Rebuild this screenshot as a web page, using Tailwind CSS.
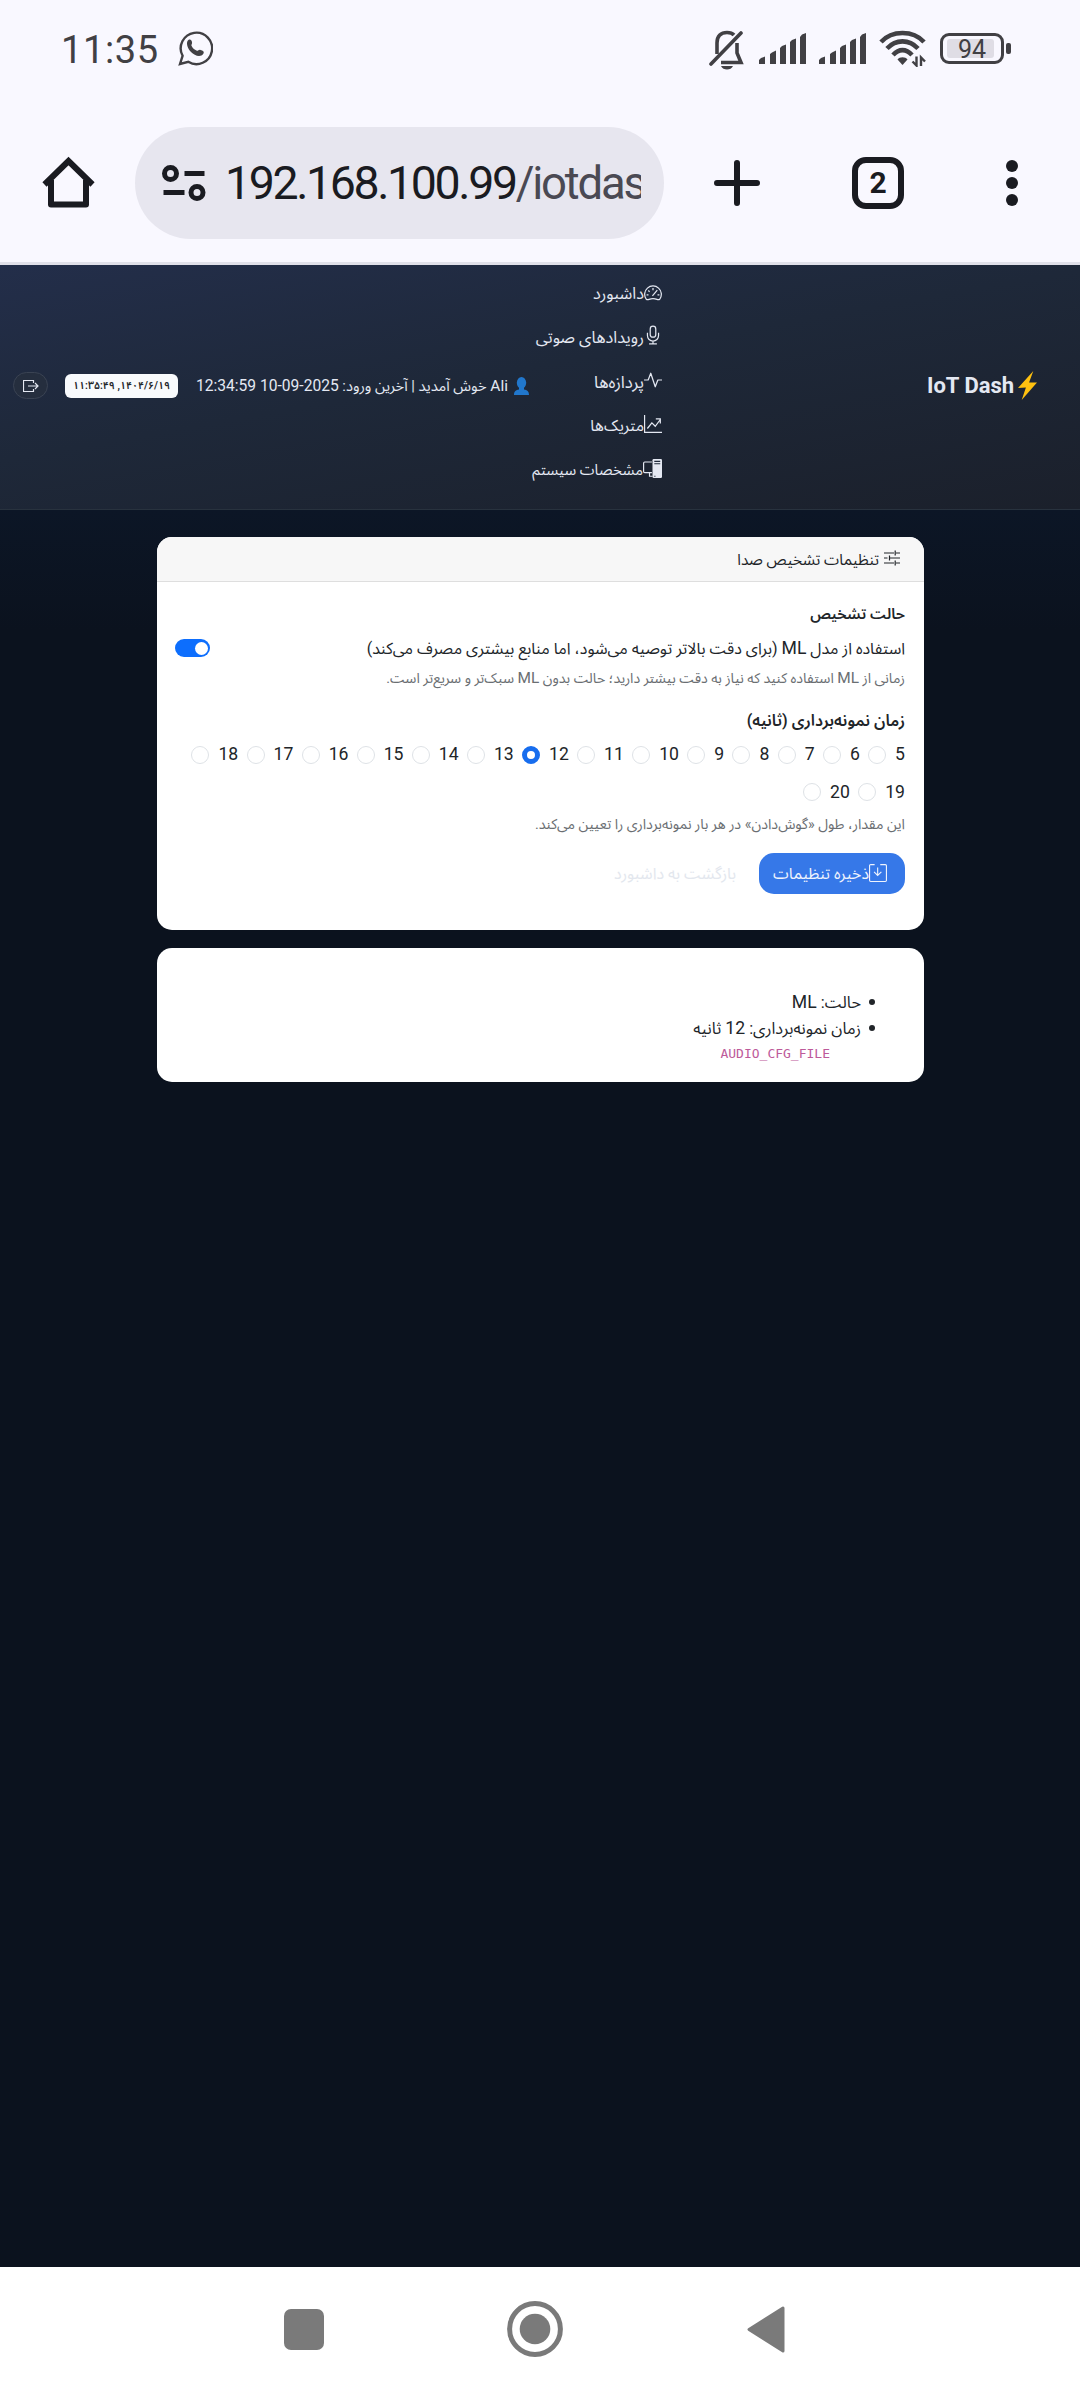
<!DOCTYPE html>
<html lang="fa">
<head>
<meta charset="utf-8">
<title>IoT Dash</title>
<script src="https://cdn.jsdelivr.net/npm/@tailwindcss/browser@4"></script>
</head>
<body class="w-[1080px] h-[2400px] overflow-hidden flex flex-col bg-[#0b121e] font-[Roboto,'Noto_Sans_Arabic','DejaVu_Sans',sans-serif]">

<!-- Status bar -->
<div class="h-[98px] shrink-0 bg-[#f9f8ff] flex items-center pl-[61px] pr-[69px] text-[#414044]">
  <span class="text-[38px] leading-[44px] tracking-[0.6px] font-[450] mt-[1px] w-[117px]">11:35</span>
  <svg class="w-[35px] h-[36px] -mt-[2px]" viewBox="0 0 35 36" fill="none"><path d="M2 34l2.600-8.200A15.700 15.700 0 1 1 10.300 31.800Z" stroke="currentColor" stroke-width="2.400"/><path d="M9.500 11c2-2.500 4-1.500 4.500 1 .4 2-.8 2.500-.6 3.600 1 2.600 3 4.300 5.500 5.200 1.200.3 1.800-1.500 3.600-.9 2.500.7 4 1.700 3 3.600-3 4.600-9 2-12.500-1.500C10 19 8 14 9.500 11Z" fill="currentColor"/></svg>
  <div class="ml-auto flex items-center">
    <svg class="w-[36px] h-[42px] -mt-[1px]" viewBox="0 0 36 42" fill="none" stroke="currentColor" stroke-width="3.600"><path d="M2 36 32 5" stroke-linecap="round"/><path d="M8 26V15C8 8 12 4.500 18 4.500c3 0 5.500.8 7 2.500"/><path d="M28 15v10l4 9.500H12"/><path d="M12 38h12c-1 2.500-3.500 3.400-6 3.400S13 40.500 12 38Z" fill="currentColor" stroke="none"/></svg>
    <svg class="w-[48px] h-[32px] ml-[14px]" viewBox="0 0 48 32" fill="currentColor"><path d="M0 31v-4l2-2 4-1.500V31ZM11 31V21l2-1.500 4-2V31ZM21 31V15l2-2 4-1.500V31ZM31 31V9l2-2 4-1.500V31ZM41 31V4l2-2.500L47 0V31Z"/></svg>
    <svg class="w-[48px] h-[32px] ml-[12px]" viewBox="0 0 48 32" fill="currentColor"><path d="M0 31v-4l2-2 4-1.500V31ZM11 31V21l2-1.500 4-2V31ZM21 31V15l2-2 4-1.500V31ZM31 31V9l2-2 4-1.500V31ZM41 31V4l2-2.500L47 0V31Z"/></svg>
    <svg class="w-[47px] h-[38px] ml-[12px] -mt-[2px]" viewBox="0 0 47 38" fill="none" stroke="currentColor" stroke-width="4.600"><path d="M2 13C13 1 34 1 45 13M8 19.500C17 10 30 10 39 19.500M14 26C20 19.500 27 19.500 33 26"/><path d="M18.500 30.500c2-3 8-3 10 0L23.500 36Z" fill="currentColor" stroke="none"/><path d="M37.500 27.500v9l-4-4M42 37V28.500l4 4" stroke-width="2.400"/></svg>
    <div class="ml-[14px] w-[64px] h-[31px] rounded-[9px] border-[3px] border-[#414044] p-[3px] -mt-[2px]"><div class="w-[47px] h-[19px] ml-[1px] bg-[#dfdde5] rounded-[3px]"><div class="w-[50px] text-center text-[25px] leading-[21px] font-[450]">94</div></div></div>
    <div class="w-[5px] h-[11px] ml-[2px] bg-[#414044] rounded-[2px] -mt-[2px]"></div>
  </div>
</div>

<!-- Browser toolbar -->
<div class="h-[167px] shrink-0 bg-[#f9f8ff] border-b-[3px] border-[#e0e0e9] flex text-[#1a1b21] pl-[42px]">
  <svg class="w-[53px] h-[54px] mt-[58px]" viewBox="0 0 53 54" fill="none" stroke="currentColor" stroke-width="6"><path d="M2.500 28.500 26.500 5 50.500 28.500"/><path d="M9 24v24.500h35V24" stroke-linejoin="round"/></svg>
  <div class="ml-[40px] mt-[29px] w-[529px] h-[112px] rounded-full bg-[#e7e6ef] flex items-center pl-[27px]">
    <svg class="w-[44px] h-[38px] shrink-0" viewBox="0 0 44 38" fill="none" stroke="currentColor" stroke-width="5"><circle cx="8.500" cy="9.500" r="6"/><path d="M22.500 9.500h20M1.500 28.500h21"/><circle cx="35" cy="28.500" r="6"/></svg>
    <div class="ml-[19px] w-[416px] overflow-hidden whitespace-nowrap text-[46.500px] leading-[56px] tracking-[-2.400px]">192.168.100.99<span class="text-[#4a4953] text-[45.500px] tracking-[-2.200px]">/iotdash</span></div>
  </div>
  <svg class="w-[46px] h-[48px] mt-[61px] ml-[50px]" viewBox="0 0 46 48" fill="none" stroke="currentColor" stroke-width="6" stroke-linecap="round"><path d="M3 24h40M23 4v40"/></svg>
  <div class="ml-[92px] mt-[59px] w-[52px] h-[52px] rounded-[14px] border-[6px] border-current flex items-center justify-center text-[30px] leading-none font-bold">2</div>
  <div class="ml-[102px] mt-[62px] flex flex-col gap-[5px]"><i class="size-[12px] rounded-full bg-current"></i><i class="size-[12px] rounded-full bg-current"></i><i class="size-[12px] rounded-full bg-current"></i></div>
</div>

<!-- Page header -->
<header dir="rtl" class="h-[245px] shrink-0 border-b border-[#28323e] bg-[linear-gradient(170deg,#232e4a_0%,#1e2839_45%,#1b202b_100%)] flex items-center pr-[43px] text-[#e4e8f2]">
  <svg class="w-[19px] h-[29px] shrink-0 -mt-[3px]" viewBox="0 0 18 28" preserveAspectRatio="none"><path d="M14.500 0 0 16.500l7.500-.5L3.500 28 18 11h-7.500Z" fill="#ffc110"/></svg>
  <span class="mr-[4px] w-[86px] text-[22px] leading-[28px] font-bold whitespace-nowrap mt-[-2px]" dir="ltr"><span class="-ml-[1px]">IoT Dash</span></span>
  <nav class="mr-[266px] w-[130px] flex flex-col mt-[-10px] text-[16.300px] leading-[44px] whitespace-nowrap">
    <a class="flex items-center h-[44px]"><svg class="w-[18px] h-[18px] shrink-0 -mt-[2px]" viewBox="0 0 16 16" fill="none" stroke="currentColor" stroke-width="1.100"><path d="M2 13.500a7.400 7.400 0 1 1 12 0c-.8.700-1.500.600-2.500.2a10 10 0 0 0-7 0c-1 .4-1.700.5-2.500-.2ZM8 3.500v2M3.800 5.800l1.200 1M2.300 9.700H4M12 9.700h1.700M7.500 10.500l4.300-5"/></svg><span>داشبورد</span></a>
    <a class="flex items-center h-[44px]"><svg class="w-[18px] h-[20px] shrink-0 -mt-[6px]" viewBox="0 0 16 18" fill="none" stroke="currentColor" stroke-width="1.100"><rect x="5.500" y="1" width="5" height="10" rx="2.500"/><path d="M3 7v2.500a5 5 0 0 0 10 0V7M8 14.500V17M4.500 17h7"/></svg><span>رویدادهای صوتی</span></a>
    <a class="flex items-center h-[44px]"><svg class="w-[18px] h-[18px] shrink-0 -mt-[4px]" viewBox="0 0 16 16" fill="none" stroke="currentColor" stroke-width="1.100" stroke-linejoin="round"><path d="M0 8h3.700L6 2l4 12 2.300-6H16"/></svg><span class="text-[16.800px]">پردازه‌ها</span></a>
    <a class="flex items-center h-[44px]"><svg class="w-[18px] h-[18px] shrink-0 -mt-[4px]" viewBox="0 0 16 16" fill="none" stroke="currentColor" stroke-width="1.100"><path d="M.5 0v15.500H16M3 12l4-5 3 3 4.500-6M10.500 3.500h4v4"/></svg><span class="text-[15.800px]">متریک‌ها</span></a>
    <a class="flex items-center h-[44px]"><svg class="w-[19px] h-[19px] shrink-0 -mt-[4px]" viewBox="0 0 16 16" fill="none" stroke="currentColor" stroke-width="1"><path d="M7.500 2.500h-6a1 1 0 0 0-1 1v7a1 1 0 0 0 1 1h6M5.500 12v2.500H8"/><path d="M8 1a1 1 0 0 1 1-1h6a1 1 0 0 1 1 1v14a1 1 0 0 1-1 1H9a1 1 0 0 1-1-1Z" fill="currentColor" stroke="none"/><path d="M9.500 2h5M9.500 4h5" stroke="#1e2839"/><path d="M9.500 14.500h1" stroke="#1e2839"/></svg><span class="text-[14.900px]">مشخصات سیستم</span></a>
  </nav>
  <svg class="w-[15px] h-[18px] shrink-0 mr-[3px] -mt-[2px]" viewBox="0 0 15 18" fill="#2177cc"><ellipse cx="7.500" cy="5.800" rx="4.700" ry="5.800"/><path d="M5 10h5v2.500c3 .5 5 1.500 5 5.500H0c0-4 2-5 5-5.500Z"/></svg>
  <div class="mr-[6px] w-[313px] text-[14.700px] leading-[24px] whitespace-nowrap -mt-[3px]"><span class="text-[15.500px]">Ali</span> خوش آمدید | آخرین ورود: <span class="text-[15.600px]">2025-09-10 12:34:59</span></div>
  <div class="mr-[17px] w-[113px] h-[24px] rounded-[6px] bg-[#f8fafc] text-[#212529] text-[10.500px] font-semibold leading-[23px] text-center whitespace-nowrap shrink-0 -mt-[3px]">۱۴۰۴/۶/۱۹, ۱۱:۳۵:۴۹</div>
  <div class="mr-[17px] w-[35px] h-[27px] rounded-full border border-[#3a4353] bg-[#252e3e] flex items-center justify-center shrink-0 -mt-[3px]"><svg class="size-[16px]" viewBox="0 0 16 16" fill="none" stroke="currentColor" stroke-width="1.200"><path d="M10.500 5V2.500h-10v11h10V11M5 8h10M12 5l3 3-3 3"/></svg></div>
</header>

<!-- Page content -->
<main dir="rtl" class="h-[1757px] shrink-0 pt-[27px] pl-[1px] flex flex-col items-center bg-[linear-gradient(180deg,#0c1626_0px,#0b121e_120px)] text-[#212529]">
  <section class="w-[767px] h-[393px] rounded-[15px] bg-white overflow-hidden flex flex-col">
    <div class="h-[45px] shrink-0 bg-[#f7f7f7] border-b border-[#dedede] flex items-center pr-[24px] text-[15.300px] leading-[24px]">
      <svg class="w-[16px] h-[16px] -mt-[3px]" viewBox="0 0 16 16" fill="none" stroke="currentColor" stroke-width="1.200"><path d="M0 3h10M12 3h4M11.200.5v5M0 8h3.500M6 8h10M5.500 5.500v5M0 13h10M12 13h4M11.200 10.500v5"/></svg>
      <span class="mr-[5px] mt-[1px]">تنظیمات تشخیص صدا</span>
    </div>
    <div class="px-[19px] pt-[18px]">
      <div class="h-[28px] leading-[28px] text-[15px] font-semibold">حالت تشخیص</div>
      <div class="h-[38px] pt-[3px] flex items-center justify-between text-[16px] leading-[28px]"><span>استفاده از مدل <span class="text-[17.600px]">ML</span> (برای دقت بالاتر توصیه می‌شود، اما منابع بیشتری مصرف می‌کند)</span><span class="w-[35px] h-[18px] rounded-full bg-[#0d6efd] flex items-center pr-[2px] ml-[-1px] mt-[-1px]"><i class="size-[13px] rounded-full bg-white"></i></span></div>
      <div class="h-[24px] leading-[24px] text-[14.150px] text-[#6a6e72]">زمانی از <span class="text-[15.400px]">ML</span> استفاده کنید که نیاز به دقت بیشتر دارید؛ حالت بدون <span class="text-[15.400px]">ML</span> سبک‌تر و سریع‌تر است.</div>
      <div class="mt-[16px] h-[30px] leading-[30px] text-[16px] font-semibold">زمان نمونه‌برداری (ثانیه)</div>
      <div class="flex flex-wrap gap-x-[8.300px] text-[17.630px] leading-[37.500px]" id="durations"></div>
      <div class="h-[24px] mt-[1px] leading-[24px] text-[14.250px] text-[#6a6e72]">این مقدار، طول «گوش‌دادن» در هر بار نمونه‌برداری را تعیین می‌کند.</div>
      <div class="mt-[17px] flex items-center text-[16px]">
        <div class="w-[146px] h-[41px] rounded-[15px] bg-[#3678e8] text-[#eef3fd] flex items-center pr-[18px]"><svg class="size-[18px] -mt-[2px]" viewBox="0 0 16 16" fill="none" stroke="currentColor" stroke-width="1"><path d="M5 .5H1.500a1 1 0 0 0-1 1v13a1 1 0 0 0 1 1h13a1 1 0 0 0 1-1v-13a1 1 0 0 0-1-1H10M7.700 3v7M4.500 7l3.200 3.200L11 7"/></svg><span class="whitespace-nowrap text-[15.900px]">ذخیره تنظیمات</span></div>
        <span class="mr-[23px] text-[#e3e7ee]">بازگشت به داشبورد</span>
      </div>
    </div>
  </section>
  <section class="mt-[18px] w-[767px] h-[134px] rounded-[15px] bg-white pt-[41px] pr-[49px] text-[16.300px] leading-[26px]">
    <div class="flex items-center h-[26px]"><i class="size-[6px] rounded-full bg-[#212529] ml-[8px]"></i><span>حالت: <span class="text-[17.600px]">ML</span></span></div>
    <div class="flex items-center h-[26px]"><i class="size-[6px] rounded-full bg-[#212529] ml-[8px]"></i><span>زمان نمونه‌برداری: <span class="text-[17.600px]">12</span> ثانیه</span></div>
    <div class="pr-[45px] pt-[1px] font-['DejaVu_Sans_Mono',monospace] text-[13px] leading-[24px] text-[#bd5a9a]">AUDIO_CFG_FILE</div>
  </section>
</main>

<!-- System navigation -->
<div class="h-[133px] shrink-0 bg-white flex pl-[284px]">
  <div class="w-[40px] h-[41px] mt-[42px] rounded-[7px] bg-[#7a7a7a]"></div>
  <svg class="ml-[183px] mt-[34px] size-[56px]" viewBox="0 0 56 56"><circle cx="28" cy="28" r="25.400" fill="none" stroke="#7a7a7a" stroke-width="5"/><circle cx="28" cy="28" r="15.300" fill="#7a7a7a"/></svg>
  <svg class="ml-[184px] mt-[39px] w-[38px] h-[47px]" viewBox="0 0 38 47"><path d="M2 23.500 36 2v43Z" fill="#7a7a7a" stroke="#7a7a7a" stroke-width="3" stroke-linejoin="round"/></svg>
</div>

<script>
document.getElementById('durations').innerHTML = Array.from({length: 16}, (_, i) => i + 5).map(n =>
  `<label class="flex items-center"><span>${n}</span><i class="mr-[9px] size-[18px] rounded-full ${n === 12 ? 'border-[5px] border-[#176dee]' : 'border border-[#dee2e6]'}"></i></label>`).join('');
</script>
</body>
</html>
